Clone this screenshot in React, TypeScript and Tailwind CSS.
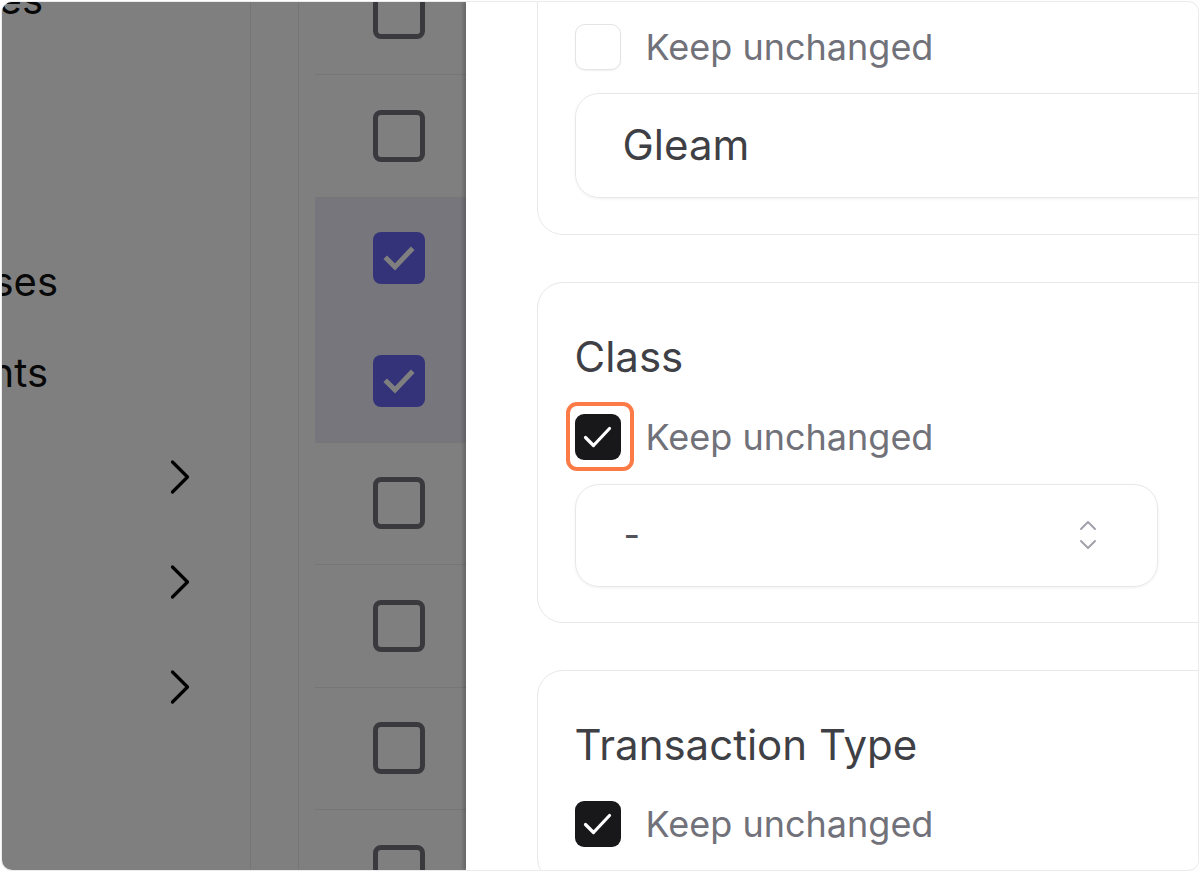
import { ChevronRight } from 'lucide-react';

const rows = [false, false, true, true, false, false, false, false];

function RowCheck({ checked }: { checked: boolean }) {
  if (checked) {
    return (
      <span className="flex h-[52px] w-[52px] items-center justify-center rounded-[8px] bg-[#6866f4]">
        <svg width="40" height="40" viewBox="0 0 40 40" fill="none">
          <path d="M8 21l8 8 16-17" stroke="#ffffff" strokeWidth="5" strokeLinecap="square" />
        </svg>
      </span>
    );
  }
  return <span className="block h-[52px] w-[52px] rounded-[8px] border-[5px] border-[#74727c]" />;
}

function KeepBox({ checked }: { checked: boolean }) {
  if (checked) {
    return (
      <span className="flex h-[46px] w-[46px] shrink-0 items-center justify-center rounded-[9px] bg-[#18181b]">
        <svg width="46" height="46" viewBox="0 0 46 46" fill="none">
          <path d="M10.5 23.5l8 8 16-17" stroke="#ffffff" strokeWidth="3.2" strokeLinecap="round" strokeLinejoin="round" />
        </svg>
      </span>
    );
  }
  return (
    <span className="block h-[46px] w-[46px] shrink-0 rounded-[10px] border-[1.5px] border-[#e4e4e7] bg-white shadow-[0_1px_2px_rgba(0,0,0,0.06)]" />
  );
}

function KeepRow({ checked, highlight }: { checked: boolean; highlight?: boolean }) {
  return (
    <div className="flex h-[46px] items-center gap-[25px]">
      <span className="relative">
        <KeepBox checked={checked} />
        {highlight && (
          <span className="absolute -left-[9px] -top-[12px] h-[69px] w-[68px] rounded-[11px] border-[4.5px] border-[#fb7a45]" />
        )}
      </span>
      <span className="text-[36px] leading-none text-[#71717a]">Keep unchanged</span>
    </div>
  );
}

function UpDown() {
  return (
    <svg width="18" height="30" viewBox="0 0 18 30" fill="none">
      <path d="M2 9l7-7 7 7" stroke="#a1a1aa" strokeWidth="2" strokeLinecap="round" strokeLinejoin="round" />
      <path d="M2 21l7 7 7-7" stroke="#a1a1aa" strokeWidth="2" strokeLinecap="round" strokeLinejoin="round" />
    </svg>
  );
}

export default function App() {
  return (
    <div className="h-[872px] w-[1200px] bg-white p-[2px]" style={{ fontFamily: 'Inter, "Noto Sans", sans-serif' }}>
      <div className="relative flex h-full w-full overflow-hidden rounded-[10px] shadow-[0_0_0_1px_#ececec]">
        {/* page behind the sheet */}
        <div className="relative flex h-full w-[464px] shrink-0 bg-white">
          <aside className="flex w-[249px] shrink-0 flex-col border-r border-[#ececec] text-[40px] leading-none text-[#111]">
            <div className="mt-[-22px] flex w-[41px] justify-end">
              <span className="shrink-0 whitespace-nowrap">Invoices</span>
            </div>
            <div className="mt-[242px] flex w-[56px] justify-end">
              <span className="shrink-0 whitespace-nowrap">Expenses</span>
            </div>
            <div className="mt-[51px] flex w-[46px] justify-end">
              <span className="shrink-0 whitespace-nowrap">Payments</span>
            </div>
            <div className="mt-[54px] flex flex-col gap-[45px] pl-[148px]">
              <ChevronRight size={60} strokeWidth={1.3} color="#000" />
              <ChevronRight size={60} strokeWidth={1.3} color="#000" />
              <ChevronRight size={60} strokeWidth={1.3} color="#000" />
            </div>
          </aside>
          <div className="w-[48px] shrink-0 border-r border-[#ececec]" />
          <div className="flex-1 pl-[16px]">
            <div className="mt-[-49.5px]">
              {rows.map((checked, i) => (
                <div
                  key={i}
                  className={`flex h-[122.5px] items-center border-b border-[#ececf0] pl-[58px] ${checked ? 'bg-[#eeecf8]' : ''}`}
                >
                  <RowCheck checked={checked} />
                </div>
              ))}
            </div>
          </div>
          <div className="absolute inset-0 bg-black/50" />
        </div>

        {/* edit sheet */}
        <div className="relative flex-1 bg-white shadow-[-3px_0_3px_rgba(0,0,0,0.18)]">
          <div className="flex w-[720px] flex-col gap-[47px] pl-[71px] pt-0">
            <section className="mt-[-60px] w-[720px] rounded-[26px] border-[1.5px] border-[#e8e8e8] px-[36.5px] pb-[36px] pt-[80.5px]">
              <KeepRow checked={false} />
              <div className="mt-[23px] flex h-[105px] items-center rounded-[24px] border-[1.5px] border-[#e8e8e8] pl-[47px] shadow-[0_1px_3px_rgba(0,0,0,0.06)]">
                <span className="text-[42px] leading-none text-[#3f3f46]">Gleam</span>
              </div>
            </section>

            <section className="w-[720px] rounded-[26px] border-[1.5px] border-[#e8e8e8] px-[36.5px] pb-[35px] pt-[52px]">
              <h3 className="text-[42px] leading-[44px] text-[#3f3f46]">Class</h3>
              <div className="mt-[35px]">
                <KeepRow checked highlight />
              </div>
              <div className="mt-[24px] flex h-[103px] w-[583px] items-center justify-between rounded-[24px] border-[1.5px] border-[#e8e8e8] pl-[48px] pr-[60px] shadow-[0_1px_3px_rgba(0,0,0,0.06)]">
                <span className="text-[36px] leading-none text-[#52525b]">-</span>
                <UpDown />
              </div>
            </section>

            <section className="w-[720px] rounded-[26px] border-[1.5px] border-[#e8e8e8] px-[36.5px] pb-[36px] pt-[52px]">
              <h3 className="text-[42px] leading-[44px] text-[#3f3f46]">Transaction Type</h3>
              <div className="mt-[34px]">
                <KeepRow checked />
              </div>
            </section>
          </div>
        </div>
      </div>
    </div>
  );
}
